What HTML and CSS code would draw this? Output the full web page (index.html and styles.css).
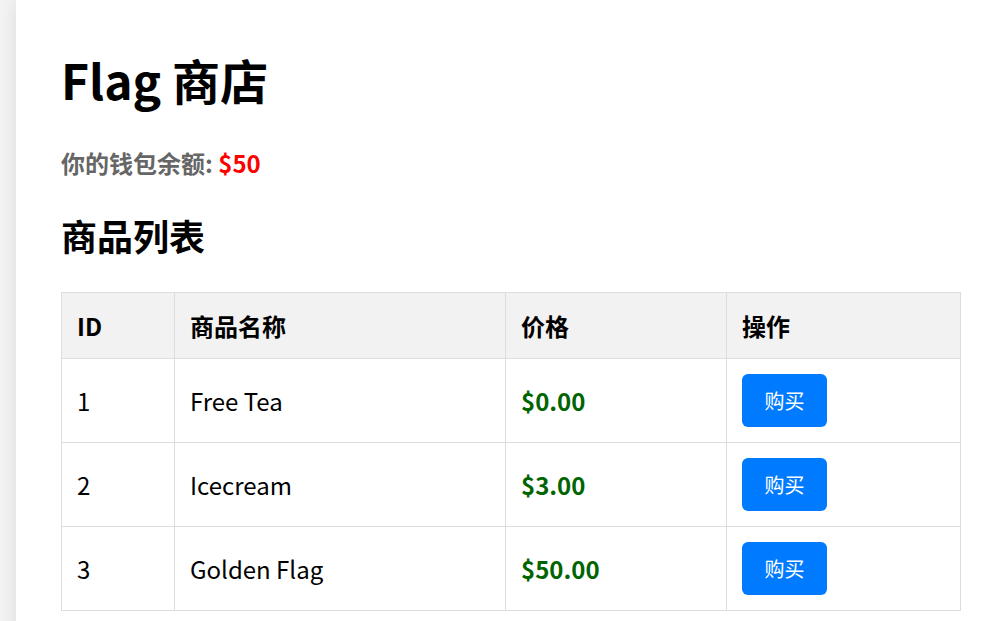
FILE: index.html
```html
<!DOCTYPE html>
<html lang="zh-CN">
<head>
  <meta charset="UTF-8">
  <meta name="viewport" content="width=device-width, initial-scale=1.0">
  <title>Flag 商店</title>
  <link rel="stylesheet" href="styles.css">
</head>
<body>
  <div class="container">
    <h1>Flag 商店</h1>

    <p class="wallet">你的钱包余额: <span class="balance">$50</span></p>

    <h2>商品列表</h2>
    <table class="goods">
      <colgroup>
        <col class="col-id">
        <col class="col-name">
        <col class="col-price">
        <col class="col-action">
      </colgroup>
      <thead>
        <tr>
          <th>ID</th>
          <th>商品名称</th>
          <th>价格</th>
          <th>操作</th>
        </tr>
      </thead>
      <tbody>
        <tr>
          <td>1</td>
          <td>Free Tea</td>
          <td class="price">$0.00</td>
          <td><button class="buy">购买</button></td>
        </tr>
        <tr>
          <td>2</td>
          <td>Icecream</td>
          <td class="price">$3.00</td>
          <td><button class="buy">购买</button></td>
        </tr>
        <tr>
          <td>3</td>
          <td>Golden Flag</td>
          <td class="price">$50.00</td>
          <td><button class="buy">购买</button></td>
        </tr>
      </tbody>
    </table>
  </div>
</body>
</html>
```

FILE: styles.css
```css
body {
  font-family: "Noto Sans CJK SC", sans-serif;
  font-size: 24px;
  margin: 0;
  background-color: #f4f4f4;
  overflow: hidden;
}

.container {
  margin-left: 16px;
  min-height: 621px;
  padding: 12px 40px 12px 45px;
  background: white;
  box-shadow: 0 0 20px rgba(0,0,0,0.1);
}

h1 {
  font-size: 48px;
  margin: 32px 0 31px;
}

.wallet {
  font-weight: bold;
  color: #666;
  margin: 0;
}

.balance {
  color: red;
}

h2 {
  font-size: 36px;
  margin: 29px 0 31px;
}

.goods {
  width: 899px;
  border-collapse: collapse;
  table-layout: fixed;
}

.col-id { width: 113px; }
.col-name { width: 331px; }
.col-price { width: 221px; }
.col-action { width: 234px; }

th, td {
  border: 1px solid #ddd;
  padding: 15px;
  text-align: left;
}

th {
  background-color: #f2f2f2;
}

.price {
  color: darkgreen;
  font-weight: bold;
}

.buy {
  font-family: inherit;
  font-size: 20px;
  padding: 12px 22.5px;
  background-color: #007bff;
  color: white;
  border: none;
  border-radius: 6px;
  cursor: pointer;
}

.buy:hover {
  background-color: #0069d9;
}
```
